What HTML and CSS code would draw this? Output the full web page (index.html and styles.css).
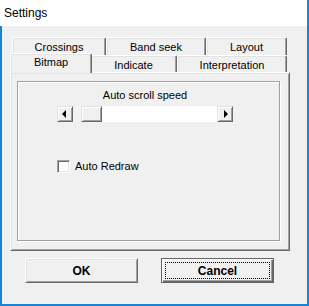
FILE: index.html
```html
<!DOCTYPE html>
<html>
<head>
<meta charset="utf-8">
<link rel="stylesheet" href="styles.css">
</head>
<body>
<div class="window">
  <div class="titlebar">Settings</div>
  <div class="client">
    <div class="tabs">
      <div class="tabrow back">
        <div class="tab w94">Crossings</div>
        <div class="tab w100">Band seek</div>
        <div class="tab w81">Layout</div>
      </div>
      <div class="tabrow front">
        <div class="tab w78 selected">Bitmap</div>
        <div class="tab w87">Indicate</div>
        <div class="tab w110">Interpretation</div>
      </div>
    </div>
    <div class="panel">
      <div class="frame">
        <div class="scrollgroup">
          <div class="label">Auto scroll speed</div>
          <div class="scrollbar">
            <div class="arrowbtn"><span class="tri left"></span></div>
            <div class="trackpress"></div>
            <div class="thumb"></div>
            <div class="track"></div>
            <div class="arrowbtn"><span class="tri right"></span></div>
          </div>
        </div>
        <div class="checkrow">
          <span class="checkbox"></span>
          <span class="checklabel">Auto Redraw</span>
        </div>
      </div>
    </div>
    <div class="buttons">
      <div class="btn">OK</div>
      <div class="btn default"><span class="focus">Cancel</span></div>
    </div>
  </div>
</div>
</body>
</html>
```

FILE: styles.css
```css
* { box-sizing: border-box; }
html, body { margin: 0; padding: 0; background: #f0f0f0; }
body {
  font-family: "Liberation Sans", Arial, sans-serif;
  font-size: 11px;
  color: #000;
}
.window {
  width: 309px;
  height: 306px;
  border-right: 2px solid #1883d7;
  display: flex;
  flex-direction: column;
}
.titlebar {
  height: 26px;
  background: #fff;
  font-size: 12px;
  line-height: 26px;
  padding-left: 4px;
  padding-top: 0;
}
.client {
  flex: 1;
  background: #f0f0f0;
  border-left: 2px solid #1883d7;
  border-bottom: 2px solid #1883d7;
  padding-top: 11px;
}
.tabs { padding-left: 10px; }
.tabrow { display: flex; align-items: flex-end; }
.tabrow.back { height: 18px; }
.tabrow.front { height: 17px; position: relative; z-index: 2; }
.tab {
  height: 100%;
  text-align: center;
  line-height: 14px;
  padding-top: 2px;
  background: #f0f0f0;
  border-top: 1px solid #fff;
  border-left: 1px solid #fff;
  border-right: 1px solid #696969;
  border-radius: 2px 2px 0 0;
  box-shadow: inset -1px 0 #a0a0a0, inset 1px 1px #e3e3e3;
  white-space: nowrap;
}
.w94 { width: 94px; }
.w100 { width: 100px; }
.w81 { width: 81px; }
.w78 { width: 78px; }
.w87 { width: 87px; }
.w110 { width: 110px; }
.tab.selected {
  height: 20px;
  width: 82px;
  margin-left: -2px;
  margin-right: -2px;
  margin-bottom: -1px;
  padding-top: 1px;
  position: relative;
  z-index: 3;
  box-shadow: inset -1px 0 #a0a0a0, inset 1px 1px #e3e3e3;
}
.panel {
  margin-left: 8px;
  width: 280px;
  height: 179px;
  background: #f0f0f0;
  border-top: 1px solid #fff;
  border-left: 1px solid #fff;
  border-right: 1px solid #696969;
  border-bottom: 1px solid #696969;
  box-shadow: inset 1px 1px #e3e3e3, inset -1px -1px #a0a0a0;
  padding: 8px 0 0 6px;
  position: relative;
  z-index: 1;
}
.frame {
  width: 263px;
  height: 160px;
  border: 1px solid #a0a0a0;
  box-shadow: 1px 1px 0 #fff, inset 1px 1px 0 #fff;
  padding: 7px 0 0 39px;
}
.scrollgroup { width: 176px; }
.label {
  text-align: center;
  line-height: 13px;
  height: 13px;
  margin-bottom: 4px;
}
.scrollbar {
  display: flex;
  height: 16px;
}
.arrowbtn {
  width: 16px;
  height: 16px;
  background: #f0f0f0;
  border-top: 1px solid #e3e3e3;
  border-left: 1px solid #e3e3e3;
  border-right: 1px solid #696969;
  border-bottom: 1px solid #696969;
  box-shadow: inset 1px 1px #fff, inset -1px -1px #a0a0a0;
  display: flex;
  align-items: center;
  justify-content: center;
}
.tri { width: 0; height: 0; border-top: 4px solid transparent; border-bottom: 4px solid transparent; }
.tri.left { border-right: 4px solid #000; margin-left: -2px; }
.tri.right { border-left: 4px solid #000; margin-left: 1px; }
.trackpress { width: 8px; background: #f3f3f3; }
.thumb {
  width: 21px;
  background: #f0f0f0;
  border-top: 1px solid #e3e3e3;
  border-left: 1px solid #e3e3e3;
  border-right: 1px solid #696969;
  border-bottom: 1px solid #696969;
  box-shadow: inset 1px 1px #fff, inset -1px -1px #a0a0a0;
}
.track { flex: 1; background: #fff; }
.checkrow {
  display: flex;
  align-items: center;
  margin-top: 37px;
  height: 15px;
}
.checkbox {
  width: 13px;
  height: 13px;
  background: #fff;
  border-top: 1px solid #a0a0a0;
  border-left: 1px solid #a0a0a0;
  border-right: 1px solid #fff;
  border-bottom: 1px solid #fff;
  box-shadow: inset 1px 1px #696969, inset -1px -1px #e3e3e3;
}
.checklabel { margin-left: 5px; line-height: 13px; }
.buttons {
  display: flex;
  gap: 23px;
  margin-top: 7px;
  padding-left: 23px;
}
.btn {
  width: 113px;
  height: 25px;
  background: #f0f0f0;
  border-top: 1px solid #fff;
  border-left: 1px solid #fff;
  border-right: 1px solid #696969;
  border-bottom: 1px solid #696969;
  box-shadow: inset 1px 1px #e3e3e3, inset -1px -1px #a0a0a0;
  font-weight: bold;
  font-size: 12px;
  display: flex;
  align-items: center;
  justify-content: center;
}
.btn.default {
  border: 1px solid #646464;
  box-shadow: inset 1px 1px #fff, inset -1px -1px #696969, inset -2px -2px #a0a0a0;
  padding: 3px;
}
.focus {
  flex: 1;
  align-self: stretch;
  border: 1px dotted #000;
  display: flex;
  align-items: center;
  justify-content: center;
}
```
